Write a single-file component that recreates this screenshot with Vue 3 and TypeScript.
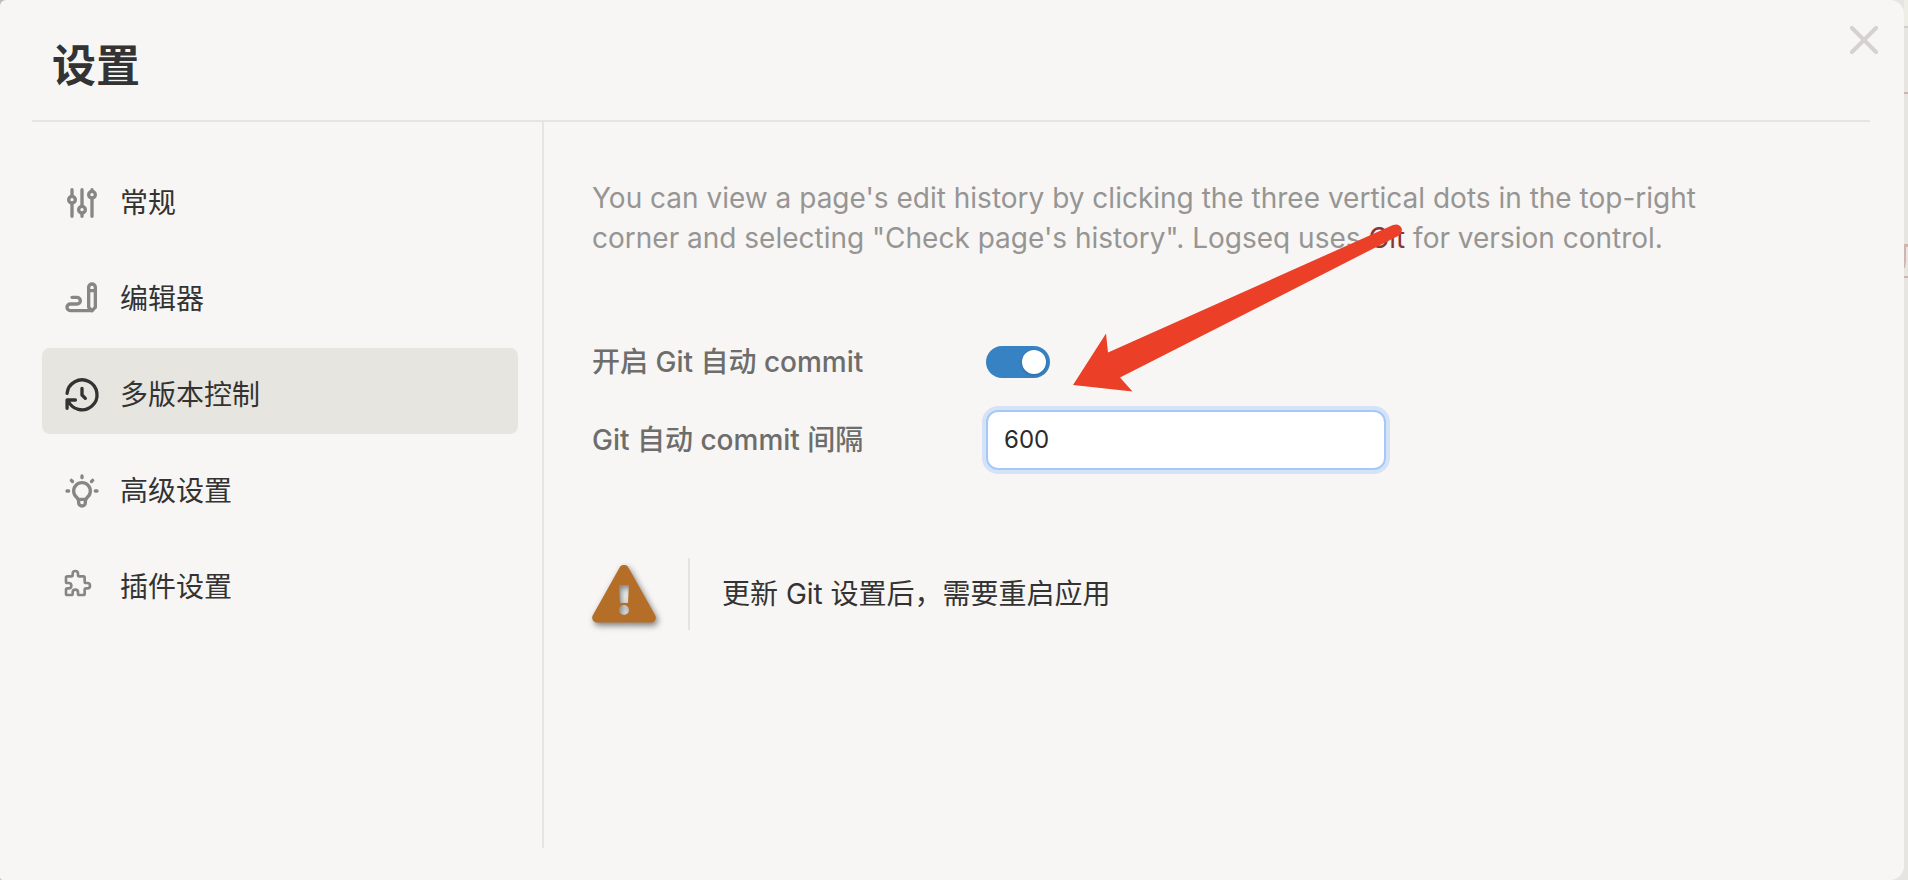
<script setup lang="ts">
import { ref } from 'vue'

interface Section {
  id: string
  label: string
  paths: string[]
  small?: boolean
}

const sections: Section[] = [
  {
    id: 'general',
    label: '常规',
    paths: [
      'M4 10a2 2 0 1 0 4 0a2 2 0 0 0 -4 0',
      'M6 4v4M6 12v8',
      'M10 16a2 2 0 1 0 4 0a2 2 0 0 0 -4 0',
      'M12 4v10M12 18v2',
      'M16 7a2 2 0 1 0 4 0a2 2 0 0 0 -4 0',
      'M18 4v1M18 9v11',
    ],
  },
  {
    id: 'editor',
    label: '编辑器',
    paths: [
      'M20 17v-12c0 -1.121 -.879 -2 -2 -2s-2 .879 -2 2v12l2 2l2 -2z',
      'M16 7h4',
      'M18 19h-13a2 2 0 1 1 0 -4h4a2 2 0 1 0 0 -4h-3',
    ],
  },
  {
    id: 'git',
    label: '多版本控制',
    paths: ['M12 8v4l2 2', 'M3.05 11a9 9 0 1 1 .5 4m-.5 5v-5h5'],
  },
  {
    id: 'advanced',
    label: '高级设置',
    paths: [
      'M3 12h1m8 -9v1m8 8h1m-15.4 -6.4l.7 .7m12.1 -.7l-.7 .7',
      'M9 16a5 5 0 1 1 6 0a3.5 3.5 0 0 0 -1 3a2 2 0 0 1 -4 0a3.5 3.5 0 0 0 -1 -3',
      'M9.7 17h4.6',
    ],
  },
  {
    id: 'plugins',
    label: '插件设置',
    small: true,
    paths: [
      'M4 7h3a1 1 0 0 0 1 -1v-1a2 2 0 0 1 4 0v1a1 1 0 0 0 1 1h3a1 1 0 0 1 1 1v3a1 1 0 0 0 1 1h1a2 2 0 0 1 0 4h-1a1 1 0 0 0 -1 1v3a1 1 0 0 1 -1 1h-3a1 1 0 0 1 -1 -1v-1a2 2 0 0 0 -4 0v1a1 1 0 0 1 -1 1h-3a1 1 0 0 1 -1 -1v-3a1 1 0 0 1 1 -1h1a2 2 0 0 0 0 -4h-1a1 1 0 0 1 -1 -1v-3a1 1 0 0 1 1 -1',
    ],
  },
]

const active = ref('git')
const autoCommit = ref(true)
const interval = ref('600')
</script>

<template>
  <div class="backdrop" lang="zh-CN">
    <svg class="behind" viewBox="0 0 4 300" aria-hidden="true">
      <path d="M0 0h4v26H0z" fill="#efeee6" />
      <path d="M0 26h4v2H0z" fill="#d0d0cb" />
      <path d="M0 92h4v2H0zM0 244h4v3H2v14l-1 7H0zM0 276h4v2H0z" fill="#d0b4b0" />
    </svg>

    <main class="panel">
      <header class="header">
        <h1 class="title">设置</h1>
        <button class="close" type="button" aria-label="关闭">
          <svg viewBox="0 0 28 28" aria-hidden="true"><path d="M2 2l24 24M26 2L2 26" /></svg>
        </button>
      </header>

      <div class="body">
        <nav class="sidebar" aria-label="设置">
          <ul class="menu">
            <li v-for="s in sections" :key="s.id">
              <button
                class="item"
                :class="{ active: active === s.id }"
                type="button"
                @click="active = s.id"
              >
                <span class="icon">
                  <svg :class="{ small: s.small }" viewBox="0 0 24 24" aria-hidden="true">
                    <path v-for="p in s.paths" :key="p" :d="p" />
                  </svg>
                </span>
                <span>{{ s.label }}</span>
              </button>
            </li>
          </ul>
        </nav>

        <section class="content">
          <p class="intro">
            You can view a page's edit history by clicking the three vertical dots in the top-right
            corner and selecting "Check page's history". Logseq uses <a href="#git">Git</a> for
            version control.
          </p>

          <form class="form" @submit.prevent>
            <div class="row">
              <label for="auto-commit">开启 Git 自动 commit</label>
              <input id="auto-commit" v-model="autoCommit" class="toggle" type="checkbox" />
            </div>
            <div class="row">
              <label for="interval">Git 自动 commit 间隔</label>
              <input id="interval" v-model="interval" class="field" type="text" inputmode="numeric" />
            </div>
          </form>

          <div class="notice">
            <svg class="warning" viewBox="0 0 64 58" aria-hidden="true">
              <path
                fill-rule="evenodd"
                d="M27.6 2.4a5.1 5.1 0 0 1 8.8 0L63.3 50.4a5 5 0 0 1-4.4 7.2H5.1A5 5 0 0 1 .7 50.4zM27 20l1 18h8l1-18zM32 40a5 5 0 1 0 0 10a5 5 0 0 0 0-10z"
              />
            </svg>
            <p class="message">更新 Git 设置后，需要重启应用</p>
          </div>

          <svg class="arrow" viewBox="0 0 332 170" aria-hidden="true">
            <path
              d="M1 162L34 110.500L36 129.500L321 2Q327 0 329.500 5Q331 9 327 12.500L48 154.500L60.500 168.500Z"
            />
          </svg>
        </section>
      </div>
    </main>
  </div>
</template>

<style>
body {
  margin: 0;
  background: #e6e5e2;
}
</style>

<style scoped>
.backdrop {
  position: relative;
  box-sizing: border-box;
  min-height: 100vh;
  padding-right: 4px;
  display: flex;
  background: linear-gradient(90deg, #bdbcba 20px, #e6e5e2 60px);
  color: #333333;
  font-family: Inter, 'Noto Sans CJK SC', sans-serif;
  font-size: 28px;
  line-height: 40px;
}

.behind {
  position: absolute;
  top: 0;
  right: 0;
  width: 4px;
  height: 300px;
}

.panel {
  flex: 1;
  min-width: 0;
  box-sizing: border-box;
  display: flex;
  flex-direction: column;
  padding: 0 34px 32px 32px;
  border-radius: 6px 14px 14px 3px;
  background: #f7f6f4;
}

.header {
  display: flex;
  justify-content: space-between;
  align-items: flex-start;
  height: 120px;
  border-bottom: 2px solid #e6e5df;
}

.title {
  margin: 36px 0 0 20px;
  font-size: 44px;
  line-height: 60px;
  font-weight: 700;
}

.close {
  margin: 26px -8px 0 0;
  padding: 0;
  border: 0;
  background: none;
  cursor: pointer;
}

.close svg {
  display: block;
  width: 28px;
  height: 28px;
  fill: none;
  stroke: #d5d1d0;
  stroke-width: 4;
  stroke-linecap: round;
}

.body {
  flex: 1;
  display: flex;
}

.sidebar {
  flex: none;
  width: 476px;
  padding: 34px 24px 0 10px;
  border-right: 2px solid #e6e5df;
}

.menu {
  margin: 0;
  padding: 0;
  list-style: none;
  display: flex;
  flex-direction: column;
  gap: 10px;
}

.item {
  display: flex;
  align-items: center;
  gap: 18px;
  width: 100%;
  height: 86px;
  padding: 8px 20px 0;
  border: 0;
  border-radius: 8px;
  background: none;
  color: inherit;
  font: inherit;
  text-align: left;
  cursor: pointer;
}

.item.active {
  background: #e6e5df;
}

.icon {
  width: 40px;
  height: 40px;
  color: #868684;
}

.active .icon {
  color: #333333;
}

.icon svg {
  display: block;
  width: 40px;
  height: 40px;
  fill: none;
  stroke: currentColor;
  stroke-width: 2;
  stroke-linecap: round;
  stroke-linejoin: round;
}

.icon svg.small {
  width: 32px;
  height: 32px;
}

.content {
  position: relative;
  flex: 1;
  min-width: 0;
  padding: 56px 150px 0 48px;
}

.intro {
  margin: 0;
  color: #969593;
}

.intro a {
  color: #8a3538;
  text-decoration: none;
}

.form {
  display: flex;
  flex-direction: column;
  gap: 28px;
  margin-top: 84px;
}

.row {
  display: grid;
  grid-template-columns: 394px 400px;
  align-items: center;
}

.row label {
  color: #6d6d6b;
  font-weight: 500;
}

.toggle {
  appearance: none;
  box-sizing: border-box;
  display: flex;
  width: 64px;
  height: 32px;
  margin: 0;
  padding: 4px;
  border-radius: 16px;
  background: #bbbbb8;
  cursor: pointer;
}

.toggle::before {
  content: '';
  width: 24px;
  height: 24px;
  border-radius: 50%;
  background: #ffffff;
  box-shadow: 0 1px 3px rgba(0, 0, 0, 0.2);
}

.toggle:checked {
  justify-content: flex-end;
  background: #3782c2;
}

.field {
  box-sizing: border-box;
  width: 100%;
  height: 60px;
  padding: 0 16px 2px;
  border: 2px solid #a6c8f9;
  border-radius: 12px;
  outline: none;
  background: #ffffff;
  box-shadow: 0 0 0 4px #d5e3f7;
  color: #2b2b2b;
  font: inherit;
  font-size: 24px;
}

.notice {
  display: flex;
  align-items: center;
  margin-top: 88px;
}

.warning {
  width: 64px;
  height: 58px;
  fill: #b56e27;
  filter: drop-shadow(2px 3px 3px rgba(0, 0, 0, 0.5));
}

.message {
  margin: 0 0 0 32px;
  padding: 16px 0 16px 32px;
  border-left: 2px solid #e3e3e1;
}

/* Hand-drawn pointer laid over the form */
.arrow {
  position: absolute;
  top: 101px;
  left: 528px;
  width: 332px;
  height: 170px;
  fill: #eb4027;
  pointer-events: none;
}
</style>
